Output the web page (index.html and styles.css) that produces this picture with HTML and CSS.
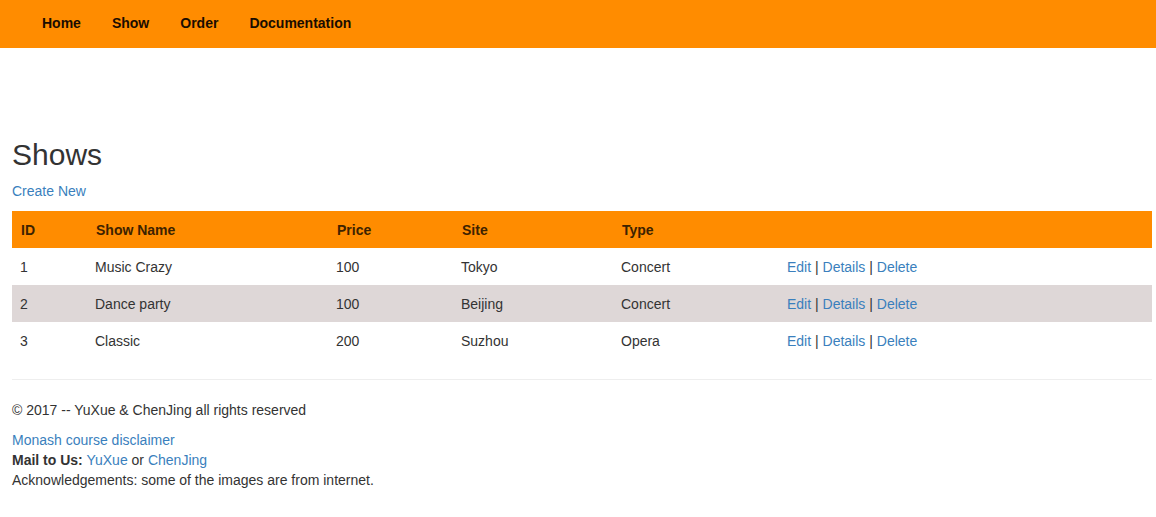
FILE: index.html
```html
<!DOCTYPE html>
<html>
<head>
<meta charset="utf-8">
<title>Shows</title>
<link rel="stylesheet" href="styles.css">
</head>
<body>
<nav class="navbar">
  <ul class="nav">
    <li><a href="#">Home</a></li>
    <li><a href="#">Show</a></li>
    <li><a href="#">Order</a></li>
    <li><a href="#">Documentation</a></li>
  </ul>
</nav>
<main class="content">
  <h2 class="title">Shows</h2>
  <p class="create"><a href="#">Create New</a></p>
  <table class="table">
    <thead>
      <tr>
        <th class="c-id">ID</th>
        <th class="c-name">Show Name</th>
        <th class="c-price">Price</th>
        <th class="c-site">Site</th>
        <th class="c-type">Type</th>
        <th class="c-act"></th>
      </tr>
    </thead>
    <tbody>
      <tr>
        <td>1</td><td>Music Crazy</td><td>100</td><td>Tokyo</td><td>Concert</td>
        <td><a href="#">Edit</a> | <a href="#">Details</a> | <a href="#">Delete</a></td>
      </tr>
      <tr class="striped">
        <td>2</td><td>Dance party</td><td>100</td><td>Beijing</td><td>Concert</td>
        <td><a href="#">Edit</a> | <a href="#">Details</a> | <a href="#">Delete</a></td>
      </tr>
      <tr>
        <td>3</td><td>Classic</td><td>200</td><td>Suzhou</td><td>Opera</td>
        <td><a href="#">Edit</a> | <a href="#">Details</a> | <a href="#">Delete</a></td>
      </tr>
    </tbody>
  </table>
  <hr class="rule">
  <footer class="footer">
    <p class="copy">&copy; 2017 -- YuXue &amp; ChenJing all rights reserved</p>
    <div class="info">
      <a href="#">Monash course disclaimer</a><br>
      <strong>Mail to Us:</strong> <a href="#">YuXue</a> or <a href="#">ChenJing</a><br>
      Acknowledgements: some of the images are from internet.
    </div>
  </footer>
</main>
</body>
</html>
```
FILE: styles.css
```css
* { box-sizing: border-box; }
html, body { margin: 0; padding: 0; }
body {
  font-family: "Liberation Sans", Arial, Helvetica, sans-serif;
  font-size: 14px;
  line-height: 20px;
  color: #333;
  background: #fff;
}
a { color: #3a7fbd; text-decoration: none; }

.navbar {
  background: #ff8c00;
  height: 48px;
}
.nav {
  list-style: none;
  margin: 0;
  padding: 0 0 0 26px;
  display: flex;
}
.nav li a {
  display: block;
  padding: 13px 15px 15px 16px;
  line-height: 20px;
  font-weight: bold;
  color: #1a0d00;
}

.content {
  padding: 0 4px 0 12px;
}
.title {
  margin: 90px 0 10px 0;
  font-size: 30px;
  font-weight: 500;
  line-height: 33px;
}
.create { margin: 0 0 10px 0; }

.table {
  width: 100%;
  border-collapse: collapse;
  border-spacing: 0;
  margin-bottom: 20px;
}
.table th {
  background: #ff8c00;
  color: #3d2200;
  text-align: left;
  font-weight: bold;
  padding: 9px 8px 8px 9px;
  height: 37px;
  line-height: 20px;
}
.table td {
  padding: 9px 8px 8px 8px;
  line-height: 20px;
  height: 37px;
  vertical-align: top;
}
.table tr.striped td { background: #ded7d7; }

.c-id { width: 75px; }
.c-name { width: 241px; }
.c-price { width: 125px; }
.c-site { width: 160px; }
.c-type { width: 166px; }

.rule {
  margin: 0 0 20px 0;
  border: 0;
  border-top: 1px solid #eee;
}
.footer .copy { margin: 0 0 10px 0; }
.info { line-height: 20px; }
```
